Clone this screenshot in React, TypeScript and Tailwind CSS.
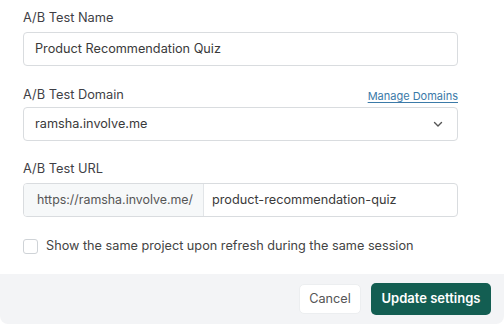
import React from "react";

export default function App() {
  const font = { fontFamily: "Inter, 'Noto Sans', sans-serif" };
  return (
    <div className="w-[504px] h-[324px] bg-white flex flex-col overflow-hidden" style={font}>
      <div className="flex flex-col pl-[23px] pr-[46px] pt-[8px]">
        <label className="text-[12.8px] leading-[20px] text-[#3f3f46]">A/B Test Name</label>
        <div className="mt-[4px] h-[34px] border border-[#d9dcdf] rounded-[4px] flex items-center px-[11px] text-[12.7px] text-[#3a3a3a]">
          Product Recommendation Quiz
        </div>

        <div className="mt-[19px] flex items-end justify-between h-[20px]">
          <label className="text-[12.8px] leading-[20px] text-[#3f3f46]">A/B Test Domain</label>
          <a className="text-[11px] leading-[16px] text-[#3b7aa8] underline underline-offset-2 mb-[1px]">Manage Domains</a>
        </div>
        <div className="mt-[2px] h-[34px] border border-[#d9dcdf] rounded-[4px] flex items-center justify-between pl-[11px] pr-[13px] text-[12.7px] text-[#3a3a3a]">
          <span>ramsha.involve.me</span>
          <svg width="12" height="12" viewBox="0 0 12 12" fill="none">
            <path d="M2.5 4.5 L6 8 L9.5 4.5" stroke="#555" strokeWidth="1.4" strokeLinecap="round" strokeLinejoin="round" />
          </svg>
        </div>

        <label className="mt-[18px] text-[12.8px] leading-[20px] text-[#3f3f46]">A/B Test URL</label>
        <div className="mt-[4px] h-[34px] border border-[#d9dcdf] rounded-[4px] flex items-stretch text-[12.7px] overflow-hidden">
          <div className="w-[180px] shrink-0 bg-[#f6f8f9] border-r border-[#e2e5e8] flex items-center pl-[13px] text-[12.4px] text-[#555]">
            https://ramsha.involve.me/
          </div>
          <div className="flex items-center pl-[8px] text-[#3a3a3a]">product-recommendation-quiz</div>
        </div>

        <div className="mt-[19px] h-[20px] flex items-center gap-[8px]">
          <div className="w-[15px] h-[15px] border border-[#cfd3d7] rounded-[3px] bg-white" />
          <span className="text-[12.7px] text-[#444]">Show the same project upon refresh during the same session</span>
        </div>
      </div>

      <div className="mt-auto h-[50px] bg-[#f3f4f6] rounded-b-[8px] flex items-center justify-end gap-[10px] pr-[13px]">
        <button className="h-[30px] w-[62px] bg-white rounded-[5px] text-[12.7px] text-[#555] border border-[#eceef0]">
          Cancel
        </button>
        <button className="h-[32px] w-[120px] bg-[#135e52] rounded-[5px] text-[13px] font-semibold text-white">
          Update settings
        </button>
      </div>
    </div>
  );
}
